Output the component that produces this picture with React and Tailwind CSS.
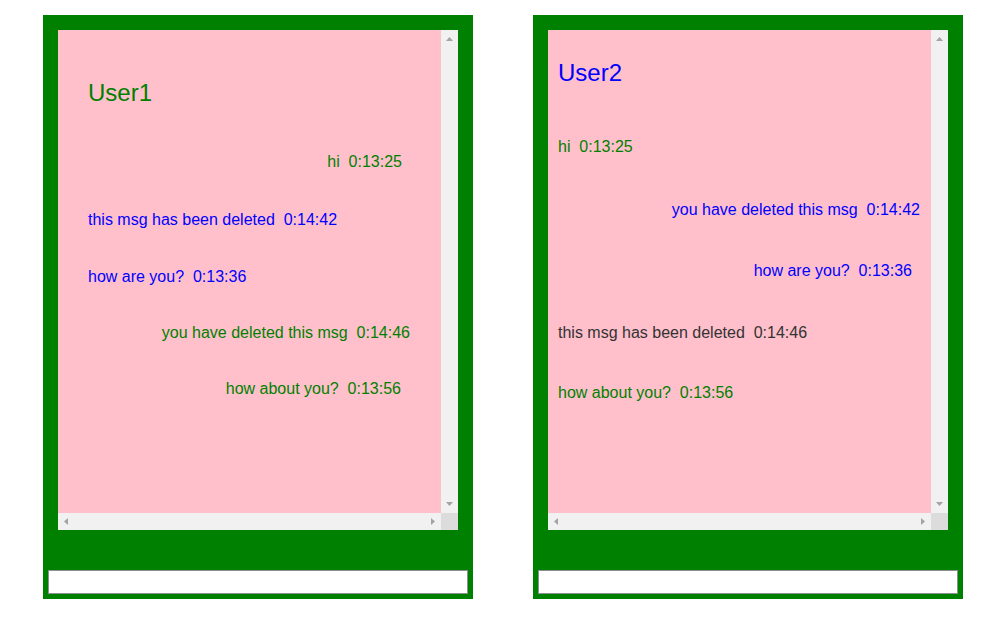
const GREEN = "text-[#008000]";
const BLUE = "text-[#0000ff]";
const GREY = "text-[#333333]";

function Arrow({ dir }) {
  // small grey triangles used on the scrollbar buttons
  const pts = {
    up: "3.5,0 7,4 0,4",
    down: "0,0 7,0 3.5,4",
    left: "4,0 4,7 0,3.5",
    right: "0,0 4,3.5 0,7",
  }[dir];
  const vertical = dir === "up" || dir === "down";
  return (
    <svg
      width={vertical ? 7 : 4}
      height={vertical ? 4 : 7}
      viewBox={vertical ? "0 0 7 4" : "0 0 4 7"}
      className="block"
    >
      <polygon points={pts} fill="#a3a3a3" />
    </svg>
  );
}

function ChatBox({ title, titleClass, titleTop, messages }) {
  return (
    <div className="w-[430px] h-[584px] bg-[#008000] pt-[15px] flex flex-col">
      <div className="mx-[15px] w-[400px] h-[500px] flex flex-col">
        <div className="flex flex-1 min-h-0">
          {/* chat content */}
          <div className="flex-1 bg-[#ffc0cb] overflow-hidden">
            <div className={`${titleClass} ${titleTop} text-[24px] leading-[28px]`}>{title}</div>
            {messages.map((m, i) => (
              <div
                key={i}
                className={`${m.color} ${m.mt} ${m.align} text-[16px] leading-[18px] whitespace-pre`}
              >
                {m.text}
              </div>
            ))}
          </div>
          {/* vertical scrollbar */}
          <div className="w-[17px] bg-[#f1f1f1] flex flex-col items-center justify-between py-[7px]">
            <Arrow dir="up" />
            <Arrow dir="down" />
          </div>
        </div>
        <div className="flex h-[17px]">
          {/* horizontal scrollbar */}
          <div className="flex-1 bg-[#f1f1f1] flex items-center justify-between px-[6px]">
            <Arrow dir="left" />
            <Arrow dir="right" />
          </div>
          <div className="w-[17px] bg-[#dcdcdc]" />
        </div>
      </div>
      <input
        type="text"
        className="mt-[40px] ml-[5px] w-[420px] h-[24px] bg-white border border-[#8f8f8f] outline-none"
      />
    </div>
  );
}

const user1 = [
  { text: "hi  0:13:25", color: GREEN, mt: "mt-[46px]", align: "text-right pr-[39px]" },
  { text: "this msg has been deleted  0:14:42", color: BLUE, mt: "mt-[40px]", align: "pl-[30px]" },
  { text: "how are you?  0:13:36", color: BLUE, mt: "mt-[39px]", align: "pl-[30px]" },
  { text: "you have deleted this msg  0:14:46", color: GREEN, mt: "mt-[38px]", align: "text-right pr-[31px]" },
  { text: "how about you?  0:13:56", color: GREEN, mt: "mt-[38px]", align: "text-right pr-[40px]" },
];

const user2 = [
  { text: "hi  0:13:25", color: GREEN, mt: "mt-[51px]", align: "pl-[10px]" },
  { text: "you have deleted this msg  0:14:42", color: BLUE, mt: "mt-[45px]", align: "text-right pr-[11px]" },
  { text: "how are you?  0:13:36", color: BLUE, mt: "mt-[43px]", align: "text-right pr-[19px]" },
  { text: "this msg has been deleted  0:14:46", color: GREY, mt: "mt-[44px]", align: "pl-[10px]" },
  { text: "how about you?  0:13:56", color: GREEN, mt: "mt-[42px]", align: "pl-[10px]" },
];

export default function App() {
  return (
    <div className="w-[1003px] h-[621px] bg-white font-['Liberation_Sans',Arial,sans-serif] flex items-start gap-[60px] pt-[15px] pl-[43px]">
      <ChatBox
        title="User1"
        titleClass={`${GREEN} pl-[30px]`}
        titleTop="pt-[49px]"
        messages={user1}
      />
      <ChatBox
        title="User2"
        titleClass={`${BLUE} pl-[10px]`}
        titleTop="pt-[29px]"
        messages={user2}
      />
    </div>
  );
}
